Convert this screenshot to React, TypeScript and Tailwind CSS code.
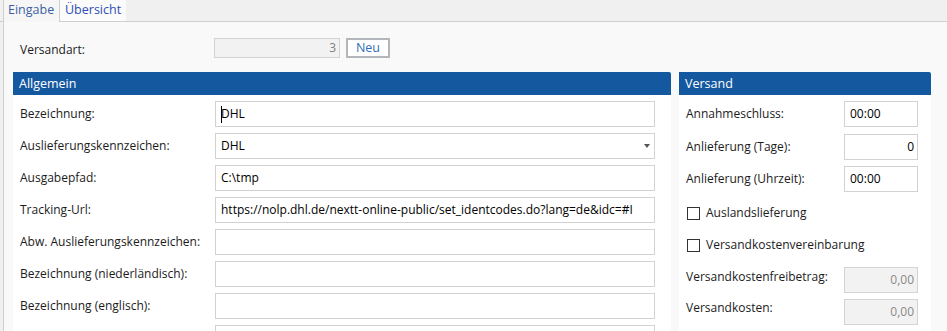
// Versandart form: tab strip, "Allgemein" and "Versand" group panels.

const LABEL = 'text-[#1b1b1b] whitespace-nowrap';
const INPUT = 'h-[26px] border border-[#d2d2d2] bg-white flex items-center overflow-hidden whitespace-nowrap text-black';
const GRAY_INPUT = 'h-[26px] w-[74px] border border-[#d4d4d4] bg-[#f2f2f2] flex items-center justify-end pr-[3px] text-[#8a8a8a]';

const ALLGEMEIN = [
  { label: 'Bezeichnung:', value: 'DHL', caret: true },
  { label: 'Auslieferungskennzeichen:', value: 'DHL', select: true },
  { label: 'Ausgabepfad:', value: 'C:\\tmp' },
  { label: 'Tracking-Url:', value: 'https://nolp.dhl.de/nextt-online-public/set_identcodes.do?lang=de&idc=#I' },
  { label: 'Abw. Auslieferungskennzeichen:', value: '' },
  { label: 'Bezeichnung (niederländisch):', value: '' },
  { label: 'Bezeichnung (englisch):', value: '' },
  { label: '', value: '' },
];

function GroupHeader({ title }: { title: string }) {
  return (
    <div className="h-[23px] shrink-0 bg-[#14589f] rounded-tr-[2px] pl-[6px] flex items-center text-white text-[12.5px]">
      {title}
    </div>
  );
}

function Checkbox({ label }: { label: string }) {
  return (
    <div className="h-[32px] flex items-center gap-[6px]">
      <span className="w-[13px] h-[13px] border border-[#333333] bg-white shrink-0" />
      <span className={LABEL}>{label}</span>
    </div>
  );
}

export default function App() {
  return (
    <div className="w-[947px] h-[331px] overflow-hidden bg-[#f0f0f0] font-['Open_Sans',sans-serif] text-[12px] leading-[16px]">
      {/* tab strip */}
      <div className="flex h-[22px]">
        <div className="w-[3px] border-b border-[#cfcfcf]" />
        <div className="w-[57px] border-l border-r border-[#cfcfcf] bg-[#f6f6f6] pl-[4px] pt-[2px] text-[#3b5fa5] text-[12.5px]">
          Eingabe
        </div>
        <div className="w-[66px] border-b border-[#cfcfcf] bg-[#fbfbfb] pl-[5px] pt-[2px] text-[#2b4db5] text-[12.5px]">
          Übersicht
        </div>
        <div className="flex-1 border-b border-[#cfcfcf]" />
      </div>

      {/* page */}
      <div className="ml-[3px] h-[309px] border-l border-[#cfcfcf] bg-[#f9f9f9] pt-[16px]">
        <div className="flex h-[20px] pl-[16px]">
          <span className={`${LABEL} w-[194px] pt-[4px]`}>Versandart:</span>
          <div className="w-[126px] h-[20px] border border-[#d2d2d2] bg-[#f2f2f2] flex items-center justify-end pr-[3px] text-[#808080]">
            3
          </div>
          <button className="ml-[6px] w-[44px] h-[20px] border-2 border-[#b3b7bc] bg-white flex items-center justify-center text-[#2f6db5] text-[12.5px]">
            Neu
          </button>
        </div>

        <div className="flex gap-[8px] pl-[9px] mt-[14px]">
          {/* Allgemein */}
          <div className="w-[658px] h-[300px] bg-white flex flex-col">
            <GroupHeader title="Allgemein" />
            <div className="flex flex-col gap-[6px] pt-[6px] pl-[7px]">
              {ALLGEMEIN.map((row, i) => (
                <div key={i} className="flex items-center">
                  <span className={`${LABEL} w-[195px]`}>{row.label}</span>
                  <div className={`${INPUT} w-[440px] pl-[5px] pr-[4px]`}>
                    {row.caret && <span className="inline-block w-px h-[17px] bg-black -mr-px" />}
                    <span className="flex-1 overflow-hidden">{row.value}</span>
                    {row.select && (
                      <span className="w-0 h-0 border-l-[3px] border-r-[3px] border-t-[4px] border-l-transparent border-r-transparent border-t-[#555555]" />
                    )}
                  </div>
                </div>
              ))}
            </div>
          </div>

          {/* Versand */}
          <div className="w-[252px] h-[300px] bg-white flex flex-col">
            <GroupHeader title="Versand" />
            <div className="flex flex-col pl-[7px] pr-[13px]">
              <div className="flex items-center justify-between mt-[6px]">
                <span className={LABEL}>Annahmeschluss:</span>
                <div className={`${INPUT} w-[74px] pl-[5px]`}>00:00</div>
              </div>
              <div className="flex items-center justify-between mt-[7px]">
                <span className={LABEL}>Anlieferung (Tage):</span>
                <div className={`${INPUT} w-[74px] justify-end pr-[3px]`}>0</div>
              </div>
              <div className="flex items-center justify-between mt-[6px]">
                <span className={LABEL}>Anlieferung (Uhrzeit):</span>
                <div className={`${INPUT} w-[74px] pl-[5px]`}>00:00</div>
              </div>
              <div className="mt-[5px] pl-px">
                <Checkbox label="Auslandslieferung" />
                <Checkbox label="Versandkostenvereinbarung" />
              </div>
              <div className="flex items-start justify-between mt-[6px]">
                <span className={`${LABEL} pt-[2px]`}>Versandkostenfreibetrag:</span>
                <div className={GRAY_INPUT}>0,00</div>
              </div>
              <div className="flex items-start justify-between mt-[6px]">
                <span className={`${LABEL} pt-[1px]`}>Versandkosten:</span>
                <div className={GRAY_INPUT}>0,00</div>
              </div>
            </div>
          </div>
        </div>
      </div>
    </div>
  );
}
